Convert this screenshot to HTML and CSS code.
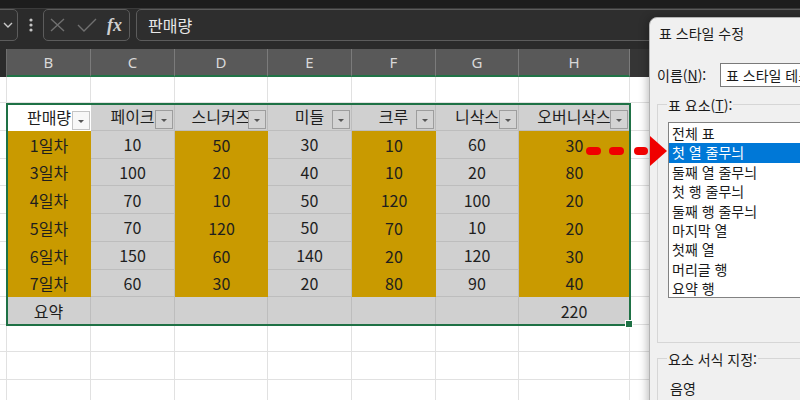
FILE: index.html
```html
<!DOCTYPE html>
<html lang="ko">
<head>
<meta charset="utf-8">
<link rel="stylesheet" href="styles.css">
</head>
<body>
<div class="topband"></div>
<div class="toolbar">
  <div class="namebox"><svg width="10" height="6" viewBox="0 0 10 6"><path d="M1 1 L5 5 L9 1" fill="none" stroke="#c8c8c8" stroke-width="1.4"/></svg></div>
  <div class="kebab"><svg width="6" height="32" viewBox="0 0 6 32"><circle cx="3" cy="11" r="1.6" fill="#c4c4c4"/><circle cx="3" cy="16" r="1.6" fill="#c4c4c4"/><circle cx="3" cy="21" r="1.6" fill="#c4c4c4"/></svg></div>
  <div class="fxbox">
    <svg class="ic-x" width="15" height="14" viewBox="0 0 15 14"><path d="M1 1 L14 13 M14 1 L1 13" stroke="#707070" stroke-width="1.4" fill="none"/></svg>
    <svg class="ic-ok" width="20" height="14" viewBox="0 0 20 14"><path d="M1 7 L7 13 L19 1" stroke="#707070" stroke-width="1.4" fill="none"/></svg>
    <span class="fx">fx</span>
  </div>
  <div class="formula">판매량</div>
</div>
<div class="colheads">
  <div class="corner"></div>
  <div class="ch">B</div>
  <div class="ch">C</div>
  <div class="ch">D</div>
  <div class="ch">E</div>
  <div class="ch">F</div>
  <div class="ch">G</div>
  <div class="ch">H</div>
  <div class="ch-rest"></div>
</div>
<div class="sheet">
  <div class="c"></div><div class="c"></div><div class="c"></div><div class="c"></div><div class="c"></div><div class="c"></div><div class="c"></div><div class="c"></div><div class="c last"></div>

  <div class="c"></div>
  <div class="t w h">판매량<b class="dd"></b></div>
  <div class="t g h">페이크<b class="dd"></b></div>
  <div class="t g h">스니커즈<b class="dd"></b></div>
  <div class="t g h">미들<b class="dd"></b></div>
  <div class="t g h">크루<b class="dd"></b></div>
  <div class="t g h">니삭스<b class="dd"></b></div>
  <div class="t g h">오버니삭스<b class="dd"></b></div>
  <div class="c last"></div>

  <div class="c"></div><div class="t o">1일차</div><div class="t g">10</div><div class="t o">50</div><div class="t g">30</div><div class="t o">10</div><div class="t g">60</div><div class="t o">30</div><div class="c last"></div>
  <div class="c"></div><div class="t o">3일차</div><div class="t g">100</div><div class="t o">20</div><div class="t g">40</div><div class="t o">10</div><div class="t g">20</div><div class="t o">80</div><div class="c last"></div>
  <div class="c"></div><div class="t o">4일차</div><div class="t g">70</div><div class="t o">10</div><div class="t g">50</div><div class="t o">120</div><div class="t g">100</div><div class="t o">20</div><div class="c last"></div>
  <div class="c"></div><div class="t o">5일차</div><div class="t g">70</div><div class="t o">120</div><div class="t g">50</div><div class="t o">70</div><div class="t g">10</div><div class="t o">20</div><div class="c last"></div>
  <div class="c"></div><div class="t o">6일차</div><div class="t g">150</div><div class="t o">60</div><div class="t g">140</div><div class="t o">20</div><div class="t g">120</div><div class="t o">30</div><div class="c last"></div>
  <div class="c"></div><div class="t o">7일차</div><div class="t g">60</div><div class="t o">30</div><div class="t g">20</div><div class="t o">80</div><div class="t g">90</div><div class="t o">40</div><div class="c last"></div>
  <div class="c"></div><div class="t g">요약</div><div class="t g"></div><div class="t g"></div><div class="t g"></div><div class="t g"></div><div class="t g"></div><div class="t g">220</div><div class="c last"></div>

  <div class="c"></div><div class="c"></div><div class="c"></div><div class="c"></div><div class="c"></div><div class="c"></div><div class="c"></div><div class="c"></div><div class="c last"></div>
  <div class="c"></div><div class="c"></div><div class="c"></div><div class="c"></div><div class="c"></div><div class="c"></div><div class="c"></div><div class="c"></div><div class="c last"></div>
  <div class="c"></div><div class="c"></div><div class="c"></div><div class="c"></div><div class="c"></div><div class="c"></div><div class="c"></div><div class="c"></div><div class="c last"></div>

  <div class="frame"></div>
</div>

<div class="dialog">
  <div class="dlg-title">표 스타일 수정</div>
  <div class="name-row">
    <span class="name-label">이름(<u>N</u>):</span>
    <div class="inp">표 스타일 테스트</div>
  </div>
  <div class="group">
    <div class="legend">표 요소(<u>T</u>):</div>
    <div class="list">
      <div class="li">전체 표</div>
      <div class="li sel">첫 열 줄무늬</div>
      <div class="li">둘째 열 줄무늬</div>
      <div class="li">첫 행 줄무늬</div>
      <div class="li">둘째 행 줄무늬</div>
      <div class="li">마지막 열</div>
      <div class="li">첫째 열</div>
      <div class="li">머리글 행</div>
      <div class="li">요약 행</div>
    </div>
  </div>
  <div class="group2">
    <div class="legend">요소 서식 지정:</div>
    <div class="shade">음영</div>
  </div>
</div>

<svg class="arrow" width="100" height="45" viewBox="0 0 100 45">
  <rect x="6" y="17" width="15" height="8" rx="4" fill="#f00000"/>
  <rect x="29" y="17" width="15" height="8" rx="4" fill="#f00000"/>
  <rect x="54" y="17" width="14" height="8" rx="4" fill="#f00000"/>
  <polygon points="70,6 87,21 70,36" fill="#f00000"/>
</svg>
</body>
</html>
```

FILE: styles.css
```css
* { box-sizing: border-box; margin: 0; padding: 0; }
html, body { width: 800px; height: 400px; overflow: hidden; }
body {
  margin: 0;
  background: #ffffff;
  font-family: "Noto Sans CJK KR", "Noto Sans", sans-serif;
  position: relative;
}

/* ---------- formula toolbar ---------- */
.topband { height: 9px; background: #1d1d1d; border-bottom: 1px solid #3b3b3b; }
.toolbar {
  height: 40px;
  background: #2b2b2b;
  display: flex;
  align-items: flex-start;
}
.namebox {
  width: 48px; height: 32px;
  margin-left: -30px;
  border: 1px solid #5c5c5c; border-radius: 5px;
  background: #2e2e2e;
  display: flex; align-items: center; justify-content: flex-end;
  padding-right: 4px;
}
.kebab { width: 6px; height: 32px; margin-left: 10px; }
.kebab svg { display: block; }
.fxbox {
  margin-left: 9px;
  width: 87px; height: 32px;
  border: 1px solid #5c5c5c; border-radius: 5px;
  background: #2e2e2e;
  display: flex; align-items: center;
  padding-left: 6px;
}
.ic-x { display: block; }
.ic-ok { display: block; margin-left: 12px; }
.fx {
  margin-left: 10px;
  font-family: "Liberation Serif", serif;
  font-style: italic;
  font-weight: bold;
  font-size: 18px;
  line-height: 20px;
  color: #cfcfcf;
}
.formula {
  margin-left: 6px;
  flex: 1;
  margin-right: -10px;
  height: 32px;
  border: 1px solid #5c5c5c; border-radius: 5px;
  background: #2e2e2e;
  padding-left: 11px;
  color: #e8e8e8;
  font-size: 16px;
  line-height: 30px;
}

/* ---------- column headers ---------- */
.colheads {
  display: grid;
  grid-template-columns: 7px 84px 84px 93px 84px 84px 83px 111px 1fr;
  height: 28px;
  background: #2b2b2b;
}
.corner { background: #2b2b2b; border-right: 1px solid #6e6e6e; }
.ch {
  background: #595959;
  border-right: 1px solid #7b7b7b;
  border-bottom: 2px solid #217346;
  color: #d8d8d8;
  font-family: "Noto Sans", sans-serif;
  font-size: 15px;
  display: flex; align-items: center; justify-content: center;
}
.ch-rest { background: #353535; }

/* ---------- sheet ---------- */
.sheet {
  position: relative;
  display: grid;
  grid-template-columns: 7px 84px 84px 93px 84px 84px 83px 111px 1fr;
  grid-template-rows: 26px repeat(8, 27.75px) 27px 28px 30px;
}
.c { border-right: 1px solid #e1e1e1; border-bottom: 1px solid #e1e1e1; }
.c.last { border-right: none; }
.t {
  position: relative;
  overflow: hidden;
  white-space: nowrap;
  display: flex; align-items: center; justify-content: center;
  font-size: 16px;
  line-height: 20px;
  color: #1e1e1e;
}
.o { background: #c99a00; }
.g { background: #d0d0d0; border-right: 1px solid #bdbdbd; border-bottom: 1px solid #bdbdbd; }
.w { background: #ffffff; }
.dd {
  position: absolute;
  right: 1px; bottom: 1px;
  width: 18px; height: 19px;
  border: 1px solid #9d9d9d;
  background: #d3d3d3;
  display: flex; align-items: center; justify-content: center;
}
.w .dd { background: #f7f7f7; border-color: #c4c4c4; }
.dd::after {
  content: "";
  border-left: 3px solid transparent;
  border-right: 3px solid transparent;
  border-top: 3px solid #555555;
  margin-top: 2px;
}
.frame {
  position: absolute;
  grid-area: 2 / 2 / 10 / 9;
  top: 0; left: -1px; right: -1px; bottom: -1px;
  border: 2px solid #1e7145;
}
.frame::after {
  content: "";
  position: absolute;
  right: -4px; bottom: -4px;
  width: 6px; height: 6px;
  background: #1e7145;
  border: 1px solid #ffffff;
}

/* ---------- dialog ---------- */
.dialog {
  position: absolute;
  left: 649px; top: 17px;
  width: 172px; height: 400px;
  background: #f0f0f0;
  border: 1px solid #b3b3b3;
  border-radius: 8px 0 0 0;
  box-shadow: -2px 0 8px rgba(0, 0, 0, 0.25);
  font-size: 14px;
  color: #1a1a1a;
  z-index: 5;
}
.dlg-title { height: 32px; line-height: 30px; padding-left: 9px; }
.name-row {
  display: flex; align-items: center;
  margin-top: 13px;
  height: 24px;
  padding-left: 7px;
}
.name-label { width: 63px; line-height: 20px; white-space: nowrap; }
.inp {
  flex: 1;
  height: 24px;
  background: #ffffff;
  border: 1px solid #7a7a7a;
  padding-left: 5px;
  line-height: 22px;
  white-space: nowrap;
  overflow: hidden;
}
.group {
  margin: 17px 0 0 7px;
  height: 239px;
  border: 1px solid #d6d6d6;
  border-right: none;
  padding-left: 9px;
}
.legend {
  width: max-content;
  background: #f0f0f0;
  margin-top: -10px;
  padding: 0 1px;
  height: 20px;
  line-height: 20px;
  white-space: nowrap;
}
.list {
  margin: 7px 0 0 1px;
  height: 176px;
  background: #ffffff;
  border: 1px solid #828282;
  border-right: none;
  padding-top: 1px;
  overflow: hidden;
}
.li { height: 19.4px; line-height: 19.4px; padding-left: 3px; white-space: nowrap; }
.li.sel { background: #0078d7; color: #ffffff; }
.group2 {
  margin: 15px 0 0 7px;
  height: 60px;
  border-top: 1px solid #d6d6d6;
  border-left: 1px solid #d6d6d6;
  padding-left: 9px;
}
.shade { margin: 9px 0 0 3px; line-height: 20px; }

/* ---------- annotation arrow ---------- */
.arrow {
  position: absolute;
  left: 580px; top: 130px;
  z-index: 10;
}
```
